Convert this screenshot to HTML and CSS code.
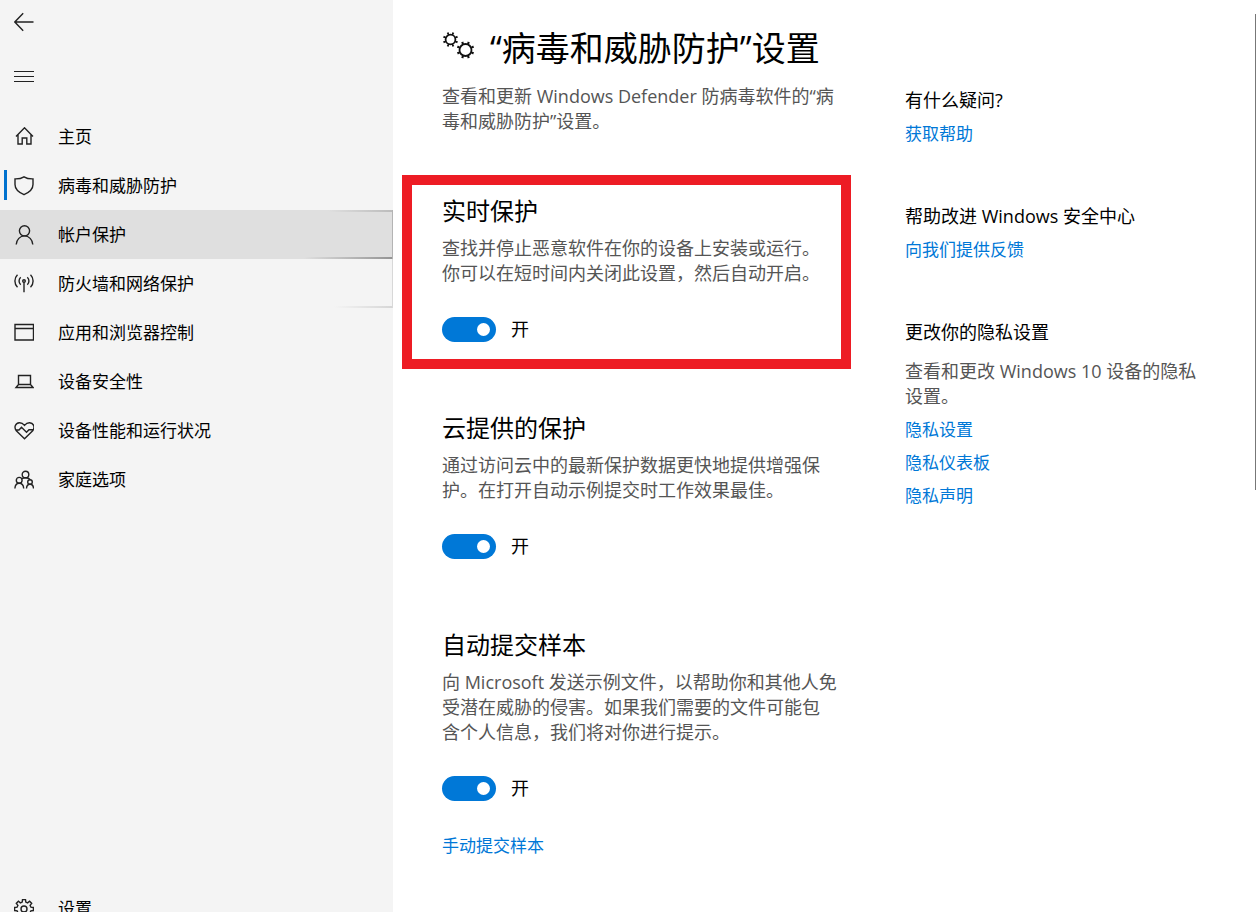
FILE: index.html
```html
<!DOCTYPE html>
<html lang="zh-CN">
<head>
<meta charset="utf-8">
<meta name="viewport" content="width=device-width, initial-scale=1">
<title>Windows 安全中心</title>
<link rel="stylesheet" href="styles.css">
</head>
<body>
<div class="app">
  <aside class="sidebar">
    <div class="tools">
      <button class="tool" type="button" aria-label="后退">
        <svg class="icon" viewBox="0 0 20 20"><path d="M19.500 10H.8M9.200 1.300.800 10l8.400 8.700"/></svg>
      </button>
      <button class="tool" type="button" aria-label="菜单">
        <svg class="icon thin" viewBox="0 0 20 20"><path d="M0 5.500h20M0 10.500h20M0 15.500h20"/></svg>
      </button>
    </div>
    <nav class="nav">
      <a class="nav-item" href="#home">
        <svg class="icon" viewBox="0 0 20 20"><path d="M2 9.500 10.500 .8 19 9.500M4 7.700v9.300h4.200v-6h4.600v6H17V7.700"/></svg>
        <span>主页</span>
      </a>
      <a class="nav-item current" href="#virus" aria-current="page">
        <svg class="icon" viewBox="0 0 20 20"><path d="M10 .8C7.500 2.400 4.200 3 1 2.900v5.600c0 4.600 4 8 9 10.200 5-2.200 9-5.600 9-10.200V2.900C15.800 3 12.500 2.400 10 .8z"/></svg>
        <span>病毒和威胁防护</span>
      </a>
      <a class="nav-item hovered" href="#account">
        <svg class="icon" viewBox="0 0 20 20"><circle cx="10.500" cy="5.800" r="5.100"/><path d="M2.200 19.500c.4-4.900 3.800-8.600 8.300-8.600s7.900 3.700 8.300 8.600"/></svg>
        <span>帐户保护</span>
      </a>
      <a class="nav-item trail" href="#firewall">
        <svg class="icon" viewBox="0 0 20 20"><circle cx="10" cy="7" r="1.300"/><path d="M10 8.300v10M6.700 3.300a5 5 0 0 0 0 7.400M13.300 3.300a5 5 0 0 1 0 7.400M3.500 .8a8.700 8.700 0 0 0 0 12.400M16.500 .8a8.700 8.700 0 0 1 0 12.400"/></svg>
        <span>防火墙和网络保护</span>
      </a>
      <a class="nav-item" href="#app">
        <svg class="icon" viewBox="0 0 20 20"><path d="M1 1.500h18.500v15.500H1zM1 5.500h18.500"/></svg>
        <span>应用和浏览器控制</span>
      </a>
      <a class="nav-item" href="#device">
        <svg class="icon" viewBox="0 0 20 20"><path d="M4.500 12.500V3.500h12v9M4.500 12.500h12l2.500 3H2z"/></svg>
        <span>设备安全性</span>
      </a>
      <a class="nav-item" href="#health">
        <svg class="icon" viewBox="0 0 20 20"><path d="M10.500 17.800 2.300 9.700C-.4 6.200 1.500 2 5.300 1.700c2.400-.1 4 1.200 5.200 2.700 1.200-1.500 2.800-2.800 5.200-2.700 3.800.3 5.700 4.500 3 8zM1.800 9h3.200l2.500-2.700 5 5L15 8.700h4"/></svg>
        <span>设备性能和运行状况</span>
      </a>
      <a class="nav-item" href="#family">
        <svg class="icon" viewBox="0 0 20 20"><circle cx="11.500" cy="4.500" r="3.300"/><circle cx="5.200" cy="10.300" r="2.900"/><circle cx="16" cy="12" r="2.300"/><path d="M.9 18.500c.2-3.200 1.800-5.200 4.300-5.200s4.300 2 4.500 5.200M8 8.800c1-.9 2.200-1.100 3.500-1.100 2.300 0 3.900 .8 4.700 2M12.500 18.500c.1-2.500 1.500-4.200 3.500-4.200s3.400 1.700 3.500 4.200"/></svg>
        <span>家庭选项</span>
      </a>
    </nav>
    <a class="nav-item settings" href="#settings">
      <svg class="icon" viewBox="0 0 20 20"><circle cx="10" cy="10" r="3"/><path d="M8.200 3.100 8.500.600h3l.3 2.500 1.800.8 2-1.600 2.100 2.100-1.600 2 .8 1.800 2.500.3v3l-2.500.3-.8 1.800 1.600 2-2.100 2.100-2-1.600-1.800.8-.3 2.500h-3l-.3-2.500-1.800-.8-2 1.600-2.100-2.100 1.600-2-.8-1.800-2.500-.3v-3l2.500-.3.800-1.800-1.600-2 2.100-2.100 2 1.600z"/></svg>
      <span>设置</span>
    </a>
  </aside>

  <main class="main">
    <div class="content">
      <header class="intro">
        <h1 class="title">
          <svg class="gears" viewBox="0 0 32 32"><g class="teeth"><circle cx="8.500" cy="7.500" r="6.300" pathLength="8"/><circle cx="23.500" cy="18" r="7.500" pathLength="8"/></g><circle cx="8.500" cy="7.500" r="4.900"/><circle cx="23.500" cy="18" r="6"/></svg>
          <span>“病毒和威胁防护”设置</span>
        </h1>
        <p class="text">查看和更新 Windows Defender 防病毒软件的“病<br>毒和威胁防护”设置。</p>
      </header>

      <section class="option marked">
        <h2 class="heading">实时保护</h2>
        <p class="text">查找并停止恶意软件在你的设备上安装或运行。<br>你可以在短时间内关闭此设置，然后自动开启。</p>
        <label class="switch"><input class="toggle" type="checkbox" role="switch" checked><span>开</span></label>
      </section>

      <section class="option">
        <h2 class="heading">云提供的保护</h2>
        <p class="text">通过访问云中的最新保护数据更快地提供增强保<br>护。在打开自动示例提交时工作效果最佳。</p>
        <label class="switch"><input class="toggle" type="checkbox" role="switch" checked><span>开</span></label>
      </section>

      <section class="option">
        <h2 class="heading">自动提交样本</h2>
        <p class="text">向 Microsoft 发送示例文件，以帮助你和其他人免<br>受潜在威胁的侵害。如果我们需要的文件可能包<br>含个人信息，我们将对你进行提示。</p>
        <label class="switch"><input class="toggle" type="checkbox" role="switch" checked><span>开</span></label>
        <a class="link submit" href="#submit">手动提交样本</a>
      </section>
    </div>

    <aside class="help">
      <section class="group">
        <h3 class="subheading">有什么疑问?</h3>
        <a class="link" href="#help">获取帮助</a>
      </section>
      <section class="group">
        <h3 class="subheading">帮助改进 Windows 安全中心</h3>
        <a class="link" href="#feedback">向我们提供反馈</a>
      </section>
      <section class="group">
        <h3 class="subheading">更改你的隐私设置</h3>
        <p class="text note">查看和更改 Windows 10 设备的隐私<br>设置。</p>
        <a class="link" href="#privacy">隐私设置</a>
        <a class="link" href="#dashboard">隐私仪表板</a>
        <a class="link" href="#statement">隐私声明</a>
      </section>
    </aside>
    <div class="scroll-thumb"></div>
  </main>
</div>
</body>
</html>
```
FILE: styles.css
```css
* {
  box-sizing: border-box;
}

body,
h1,
h2,
h3,
p {
  margin: 0;
  font-weight: 400;
}

body {
  background: #fff;
  color: #000;
  font-family: "Open Sans", "Noto Sans CJK SC", sans-serif;
  font-size: 18px;
  line-height: 25px;
}

.app {
  display: flex;
  height: 100vh;
  overflow: hidden;
}

/* Sidebar */

.sidebar {
  display: flex;
  flex: 0 0 393px;
  flex-direction: column;
  background: #f4f4f4;
}

.tools {
  display: flex;
  flex-direction: column;
  align-items: flex-start;
  gap: 14px;
  padding: 2px 4px 16px;
}

.tool {
  display: flex;
  align-items: center;
  justify-content: center;
  width: 40px;
  height: 40px;
  padding: 0;
  border: 0;
  background: none;
}

.icon {
  flex: none;
  width: 20px;
  height: 20px;
  fill: none;
  stroke: #222;
  stroke-width: 1.4;
}

.thin {
  stroke-width: 1;
}

.nav-item {
  position: relative;
  display: flex;
  align-items: center;
  gap: 24px;
  height: 49px;
  padding-left: 14px;
  color: #000;
  font-size: 17px;
  text-decoration: none;
}

.current::before {
  position: absolute;
  top: 9px;
  left: 4px;
  width: 3px;
  height: 30px;
  background: #0072ce;
  content: "";
}

.hovered {
  border-right: 1px solid #b4b4b4;
  background:
    linear-gradient(to right, transparent, #bcbcbc) right top / 64px 2px no-repeat,
    linear-gradient(to right, transparent, #949494) right bottom / 88px 2px no-repeat,
    #dfdfdf;
}

.trail {
  border-right: 1px solid #d8d8d8;
  background: linear-gradient(to right, transparent, #d6d6d6) right bottom / 58px 2px no-repeat;
}

.settings {
  flex: none;
  margin-top: auto;
  margin-bottom: -21px;
}

/* Main area */

.main {
  position: relative;
  display: grid;
  flex: 1;
  grid-template-columns: 463fr 351fr;
  padding-left: 49px;
}

.intro {
  padding: 24px 0 61px;
}

.title {
  display: flex;
  align-items: center;
  gap: 16px;
  margin-bottom: 12px;
  font-size: 34px;
  line-height: 48px;
  white-space: nowrap;
}

.gears {
  flex: none;
  width: 32px;
  height: 32px;
  fill: none;
  stroke: #111;
  stroke-width: 1.8;
}

.teeth {
  stroke-width: 2.6;
  stroke-dasharray: 0.34 0.66;
  stroke-dashoffset: 0.67;
}

.text {
  color: #555;
  white-space: nowrap;
}

.option {
  position: relative;
  margin-bottom: 70px;
}

.marked::after {
  position: absolute;
  inset: -20px 54px -27px -40px;
  border: 10px solid #ed1c24;
  content: "";
  pointer-events: none;
}

.heading {
  margin-bottom: 9px;
  font-size: 24px;
  line-height: 32px;
}

.switch {
  display: flex;
  align-items: center;
  gap: 15px;
  width: max-content;
  margin-top: 31px;
}

.toggle {
  position: relative;
  width: 54px;
  height: 25px;
  margin: 0;
  border-radius: 13px;
  background: #0078d7;
  appearance: none;
}

.toggle::before {
  position: absolute;
  top: 6px;
  left: 6px;
  width: 13px;
  height: 13px;
  border-radius: 50%;
  background: #fff;
  content: "";
}

.toggle:checked::before {
  right: 6px;
  left: auto;
}

.link {
  display: block;
  width: max-content;
  color: #0078d7;
  font-size: 17px;
  line-height: 24px;
  text-decoration: none;
}

.submit {
  margin-top: 33px;
}

/* Help column */

.help {
  display: flex;
  flex-direction: column;
  gap: 58px;
  padding-top: 88px;
}

.group {
  display: flex;
  flex-direction: column;
  gap: 9px;
}

.subheading {
  font-size: 18px;
  line-height: 25px;
  white-space: nowrap;
}

.note {
  padding-top: 5px;
}

.scroll-thumb {
  position: absolute;
  top: 14px;
  right: 0;
  width: 1px;
  height: 476px;
  background: #777;
}
```
